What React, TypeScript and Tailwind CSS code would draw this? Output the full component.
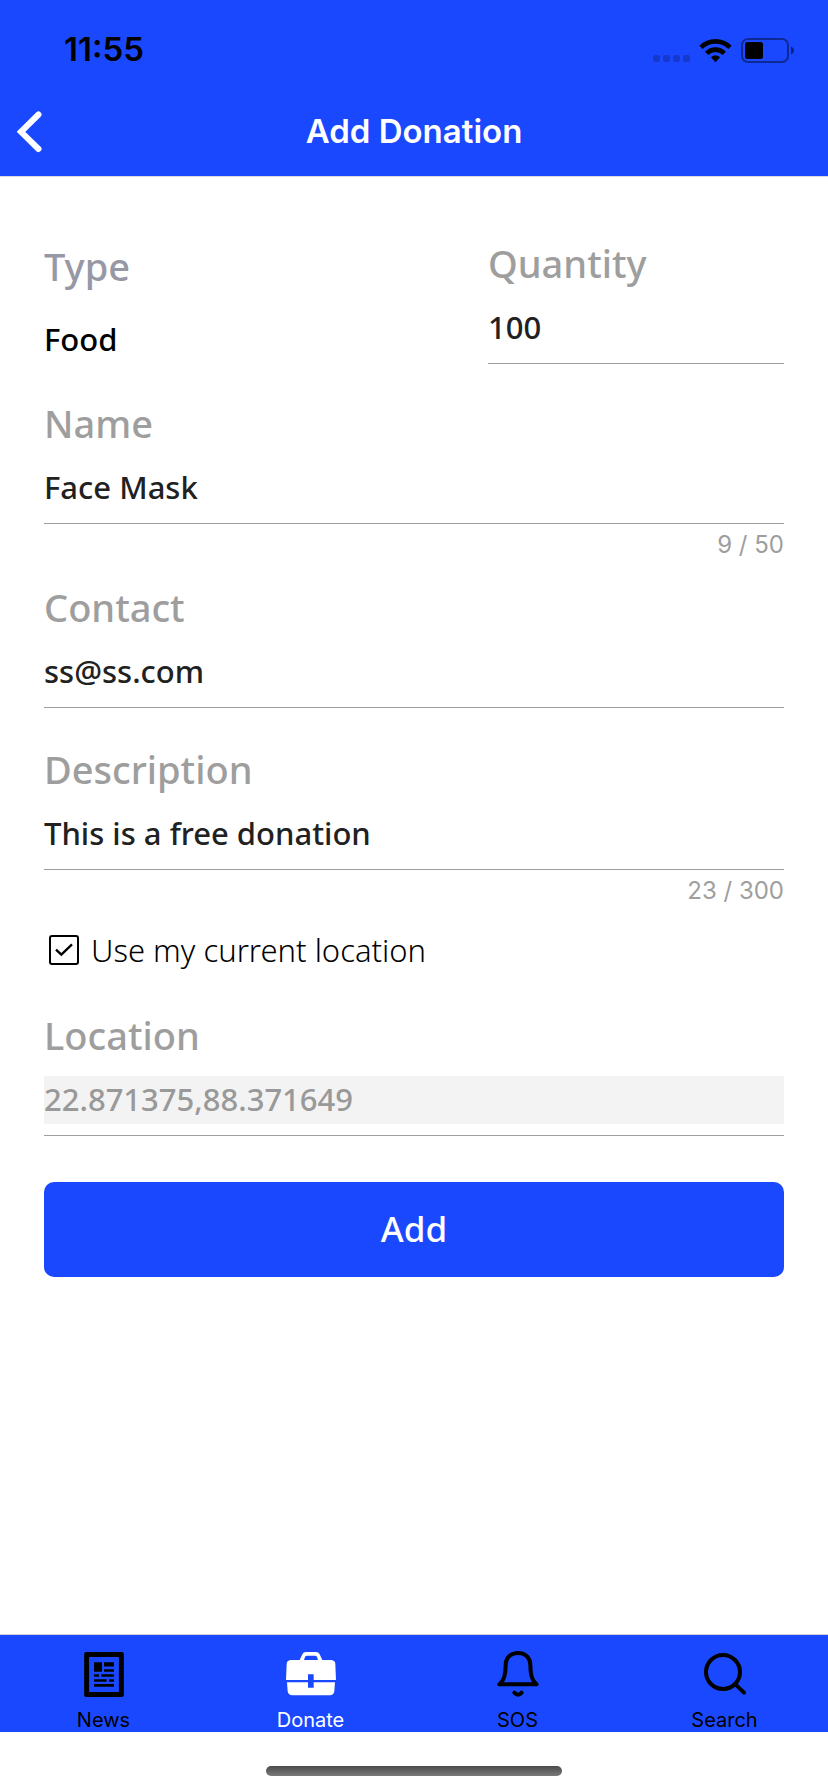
import { useState } from "react";
import type { ReactNode } from "react";

const bodyFont = "font-['Noto_Sans','Open_Sans',sans-serif]";
const systemFont = "font-['Inter','Liberation_Sans',sans-serif]";

function StatusBar() {
  return (
    <div className="flex h-22 items-center justify-between pt-3 pr-[34px] pl-16 text-black">
      <span className="text-[33px] font-semibold">11:55</span>
      <div className="flex items-center gap-[9px]">
        <svg width="37" height="25" viewBox="0 0 37 25" fill="#000" fillOpacity="0.2" aria-hidden="true">
          <rect x="0" y="17" width="7" height="7" rx="2" />
          <rect x="10" y="17" width="7" height="7" rx="2" />
          <rect x="20" y="17" width="7" height="7" rx="2" />
          <rect x="30" y="17" width="7" height="7" rx="2" />
        </svg>
        <svg width="33" height="25" viewBox="0 0 99 75" aria-hidden="true">
          <path d="M6 28C30 4 69 4 93 28" fill="none" stroke="#000" strokeWidth="14" />
          <path d="M23 46C38 31 61 31 76 46" fill="none" stroke="#000" strokeWidth="14" />
          <path d="M36 58C43 51 56 51 63 58L49.500 73Z" fill="#000" />
        </svg>
        <svg width="53" height="25" viewBox="0 0 53 25" aria-hidden="true">
          <rect x="1" y="1" width="46" height="23" rx="6" fill="none" stroke="#000" strokeOpacity="0.42" strokeWidth="2" />
          <rect x="4" y="4" width="18" height="17" rx="2.500" fill="#000" />
          <path d="M50 8.500C54 10 54 15 50 16.500Z" fill="#000" fillOpacity="0.5" />
        </svg>
      </div>
    </div>
  );
}

function Header() {
  return (
    <header className={`${systemFont} border-b border-[#d8d8e0] bg-[#1a48ff]`}>
      <StatusBar />
      <div className="grid h-22 grid-cols-[1fr_auto_1fr] items-center px-4 text-white">
        <button type="button" aria-label="Back" className="w-fit">
          <svg width="26" height="42" viewBox="0 0 26 42" fill="none" stroke="#fff" strokeWidth="6" strokeLinecap="round" aria-hidden="true">
            <path d="M22.500 3.500L5 20.800L22.500 38" />
          </svg>
        </button>
        <h1 className="text-[33px] font-semibold">Add Donation</h1>
      </div>
    </header>
  );
}

type FieldProps = {
  id: string;
  label: string;
  defaultValue: string;
  type?: string;
  disabled?: boolean;
  counter?: string;
  className?: string;
};

function Field({ id, label, defaultValue, type = "text", disabled, counter, className = "" }: FieldProps) {
  return (
    <div className={className}>
      <label htmlFor={id} className="block h-14 text-[38px] leading-[30px] font-medium text-[#9e9e9e]">
        {label}
      </label>
      <div className="border-b border-[#9e9e9e] pb-[11px]">
        <input
          id={id}
          type={type}
          defaultValue={defaultValue}
          disabled={disabled}
          className="block h-12 w-full bg-transparent pb-0.5 text-[31px] font-medium text-[#212121] outline-none disabled:bg-[#f3f3f3] disabled:text-[#999999]"
        />
      </div>
      {counter && (
        <p className={`${systemFont} pt-2 text-right text-2xl leading-[26px] text-[#9e9e9e]`}>{counter}</p>
      )}
    </div>
  );
}

function Tab({ label, active, children }: { label: string; active?: boolean; children: ReactNode }) {
  return (
    <a
      href="#"
      aria-current={active ? "page" : undefined}
      className={`flex flex-1 flex-col items-center pt-3.5 ${active ? "text-white" : "text-black"}`}
    >
      <span className="flex h-[50px] items-center">{children}</span>
      <span className="mt-2.5 text-[20px] leading-[23px]">{label}</span>
    </a>
  );
}

function NewsIcon() {
  return (
    <svg width="40" height="45" viewBox="0 0 120 136" fill="currentColor" aria-hidden="true">
      <path
        fillRule="evenodd"
        d="M6 0H114Q120 0 120 6V130Q120 136 114 136H6Q0 136 0 130V6Q0 0 6 0ZM15 15V121H105V15Z"
      />
      <path d="M30 31H54V60H30ZM60 31H90V44H60ZM60 52H90V60H60ZM30 67H45V75H30ZM52 67H90V75H52ZM30 82H68V90H30ZM75 82H90V90H75ZM30 97H90V105H30Z" />
    </svg>
  );
}

function BriefcaseIcon() {
  return (
    <svg width="50" height="44" viewBox="0 0 150 132" fill="currentColor" aria-hidden="true">
      <path
        fillRule="evenodd"
        d="M41 24L49 7Q52 0 60 0H90Q98 0 101 7L109 24H136Q148 25 148 37L150 84H83V67H66V84H0L2 37Q2 25 14 24ZM54 24H96L93 15Q91 11 87 11H63Q59 11 57 15Z"
      />
      <path d="M3 91H66V107H83V91H147L145 118Q143 130 131 130H19Q7 130 5 118Z" />
    </svg>
  );
}

function BellIcon() {
  return (
    <svg width="42" height="46" viewBox="0 0 126 138" fill="none" stroke="currentColor" strokeWidth="12" strokeLinecap="round" strokeLinejoin="round" aria-hidden="true">
      <path d="M63 6C38 6 26 23 26 42C26 68 22 83 14 93L7 100H119L112 93C104 83 100 68 100 42C100 23 88 6 63 6Z" />
      <path d="M52 125Q63 137 74 125" />
    </svg>
  );
}

function SearchIcon() {
  return (
    <svg width="42" height="42" viewBox="0 0 126 126" fill="none" stroke="currentColor" strokeWidth="12" strokeLinecap="round" aria-hidden="true">
      <circle cx="57" cy="57" r="51" />
      <path d="M95 95L120 119" />
    </svg>
  );
}

export default function App() {
  const [useLocation, setUseLocation] = useState(true);

  return (
    <div className={`${bodyFont} flex min-h-screen flex-col bg-white`}>
      <Header />
      <main className="flex-1 px-11 pt-[71px]">
        <form onSubmit={(e) => e.preventDefault()}>
          <div className="flex">
            <div className="w-3/5">
              <label htmlFor="type" className="block h-[68px] pt-0.5 text-[38px] leading-[32px] font-medium text-[#9698a5]">
                Type
              </label>
              <select id="type" className="block h-12 w-4/5 appearance-none bg-transparent pb-0.5 text-[31px] font-medium text-black outline-none">
                <option>Food</option>
              </select>
            </div>
            <Field id="quantity" label="Quantity" defaultValue="100" className="w-2/5" />
          </div>
          <Field id="name" label="Name" defaultValue="Face Mask" counter="9 / 50" className="mt-11" />
          <Field id="contact" label="Contact" type="email" defaultValue="ss@ss.com" className="mt-[34px]" />
          <Field id="description" label="Description" defaultValue="This is a free donation" counter="23 / 300" className="mt-[46px]" />

          <div className="mt-5 flex h-[52px] items-center pl-[5px]">
            <span className="grid size-[30px]">
              <input
                id="use-location"
                type="checkbox"
                checked={useLocation}
                onChange={(e) => setUseLocation(e.target.checked)}
                className="peer col-start-1 row-start-1 size-[30px] appearance-none rounded-[3px] border-2 border-black"
              />
              <svg
                viewBox="0 0 90 90"
                fill="none"
                stroke="#000"
                strokeWidth="7"
                className="pointer-events-none invisible col-start-1 row-start-1 size-[30px] peer-checked:visible"
                aria-hidden="true"
              >
                <path d="M21 44L37 59L69 28" />
              </svg>
            </span>
            <label htmlFor="use-location" className="pl-3 text-[31px] font-light text-black">
              Use my current location
            </label>
          </div>

          <Field id="location" label="Location" defaultValue="22.871375,88.371649" disabled className="mt-11" />

          <button type="submit" className="mt-[46px] h-[95px] w-full rounded-[10px] bg-[#1a48ff] text-[35px] font-medium text-white">
            Add
          </button>
        </form>
      </main>
      <nav className={`${systemFont} flex border-t border-[#d0d0d8] bg-[#1a48ff]`}>
        <Tab label="News">
          <NewsIcon />
        </Tab>
        <Tab label="Donate" active>
          <BriefcaseIcon />
        </Tab>
        <Tab label="SOS">
          <BellIcon />
        </Tab>
        <Tab label="Search">
          <SearchIcon />
        </Tab>
      </nav>
      <div className="flex h-15 justify-center pt-[34px]">
        <div className="h-2.5 w-[296px] rounded-full bg-linear-to-b from-[#4b4b4b] to-[#7a7a7a]" />
      </div>
    </div>
  );
}
